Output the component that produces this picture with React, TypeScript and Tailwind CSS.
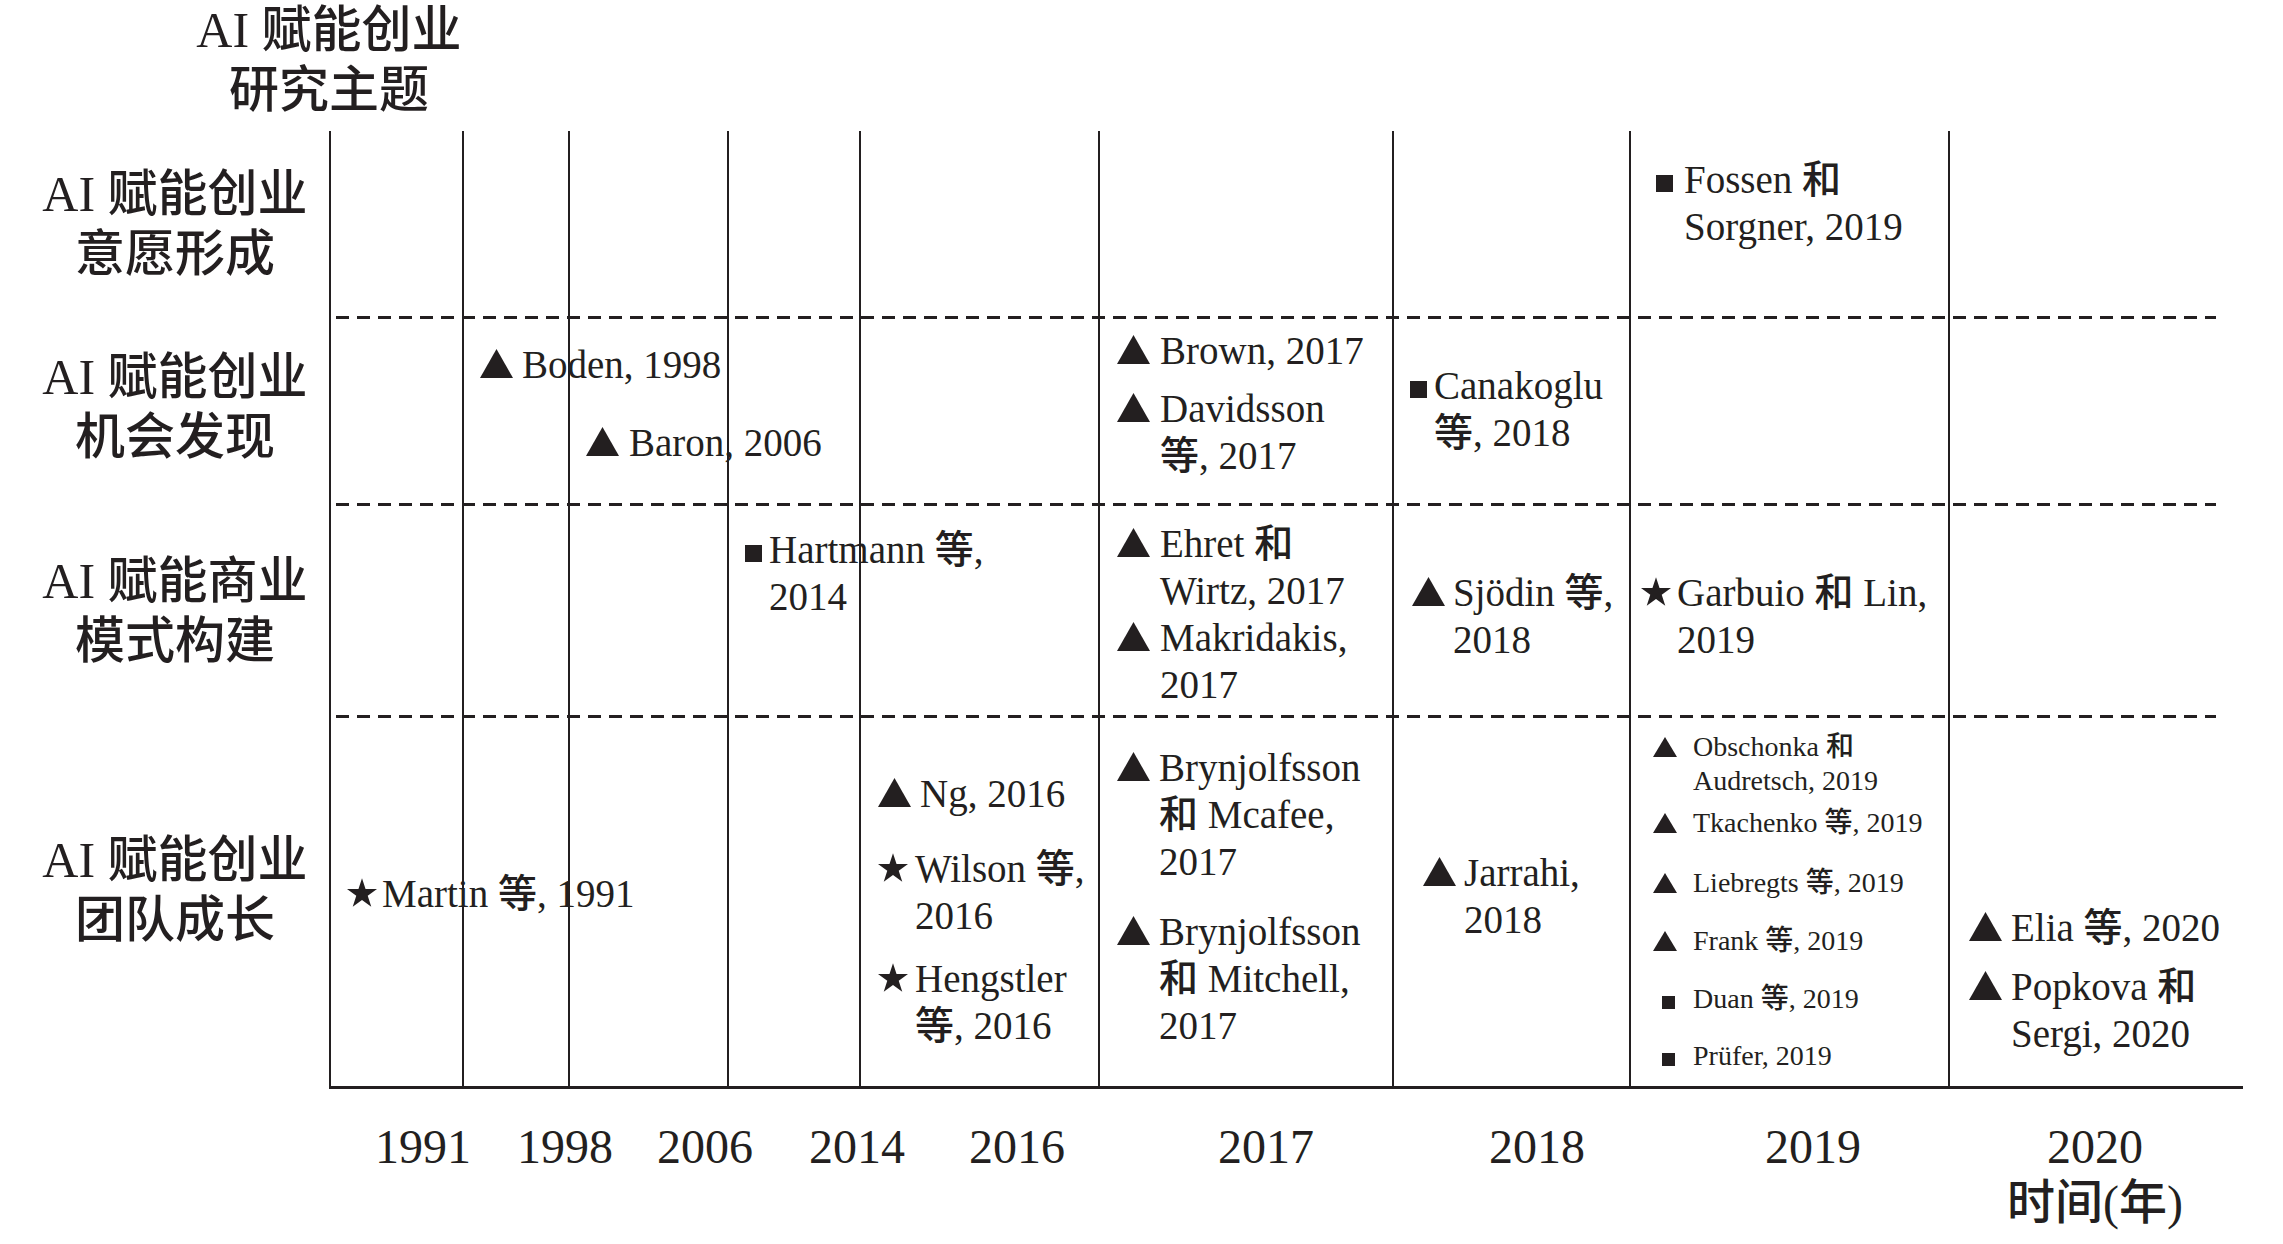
import type { ReactNode } from 'react';

type Mark = 'tri' | 'sq' | 'star' | 'stri' | 'ssq';

const INK = '#231f20';

// column widths of the timeline, left to right (1991 … 2020)
const COLS = [
  'w-[133px]',
  'w-[106px]',
  'w-[159px]',
  'w-[132px]',
  'w-[239px]',
  'w-[294px]',
  'w-[237px]',
  'w-[319px]',
  'w-[295px]',
];

function Marker({ mark }: { mark: Mark }) {
  if (mark === 'tri') {
    return (
      <svg width="33" height="29" viewBox="0 0 33 29" className="mt-[8px]">
        <path d="M16.5 0 L33 29 L0 29 Z" fill={INK} />
      </svg>
    );
  }
  if (mark === 'sq') {
    return (
      <svg width="17" height="17" viewBox="0 0 17 17" className="mt-[19px]">
        <rect width="17" height="17" fill={INK} />
      </svg>
    );
  }
  if (mark === 'star') {
    return (
      <svg width="30" height="29" viewBox="0 0 30 28.6" className="mt-[8px]">
        <polygon
          points="15,0 18.54,10.9 30,10.9 20.73,17.63 24.27,28.53 15,21.79 5.73,28.53 9.27,17.63 0,10.9 11.46,10.9"
          fill={INK}
        />
      </svg>
    );
  }
  if (mark === 'stri') {
    return (
      <svg width="24" height="20" viewBox="0 0 24 20" className="mt-[7px]">
        <path d="M12 0 L24 20 L0 20 Z" fill={INK} />
      </svg>
    );
  }
  return (
    <svg width="13" height="13" viewBox="0 0 13 13" className="mt-[14px] ml-[9px]">
      <rect width="13" height="13" fill={INK} />
    </svg>
  );
}

function Entry({
  mark,
  lines,
  slot,
  className = '',
}: {
  mark: Mark;
  lines: string[];
  slot: string;
  className?: string;
}) {
  const small = mark === 'stri' || mark === 'ssq';
  return (
    <div className={`flex ${className}`}>
      <div className={`shrink-0 ${slot}`}>
        <Marker mark={mark} />
      </div>
      <div className={small ? 'text-[28px] leading-[34px]' : 'text-[39px] leading-[47px]'}>
        {lines.map((l) => (
          <div key={l}>{l}</div>
        ))}
      </div>
    </div>
  );
}

function Row({
  label,
  height,
  labelPad = '',
  cells,
  last = false,
}: {
  label: string[];
  height: string;
  labelPad?: string;
  cells: (ReactNode | null)[];
  last?: boolean;
}) {
  return (
    <div className={`flex ${height}`}>
      <div
        className={`w-[329px] shrink-0 flex flex-col items-center justify-center pl-[21px] text-[50px] leading-[60px] ${labelPad}`}
      >
        {label.map((l) => (
          <div key={l}>{l}</div>
        ))}
      </div>
      {COLS.map((w, i) => (
        <div
          key={i}
          className={`${w} shrink-0 border-l-2 border-[#231f20] ${last ? 'border-b-[3px]' : ''}`}
        >
          {cells[i] ?? null}
        </div>
      ))}
    </div>
  );
}

function Dashes() {
  return (
    <div className="flex h-[3px]">
      <div className="w-[329px] shrink-0" />
      <div className="flex bg-[image:repeating-linear-gradient(90deg,#231f20_0px,#231f20_13px,transparent_13px,transparent_21px)] bg-no-repeat bg-[length:1880px_3px] bg-[position:7px_0px]">
        {COLS.map((w, i) => (
          <div key={i} className={`${w} shrink-0 border-l-2 border-[#231f20]`} />
        ))}
      </div>
    </div>
  );
}

export default function App() {
  return (
    <div
      className="w-[2283px] h-[1244px] overflow-hidden bg-white text-[#231f20] font-medium whitespace-nowrap"
      style={{ fontFamily: '"Liberation Serif", "Noto Sans CJK SC", serif' }}
    >
      {/* axis title */}
      <div className="h-[131px] w-[658px] text-center text-[50px] leading-[60px]">
        <div>AI 赋能创业</div>
        <div>研究主题</div>
      </div>

      <Row
        label={['AI 赋能创业', '意愿形成']}
        height="h-[185px]"
        cells={[
          null,
          null,
          null,
          null,
          null,
          null,
          null,
          <div className="pl-[25px] pt-[25px]">
            <Entry mark="sq" slot="w-[28px]" lines={['Fossen 和', 'Sorgner, 2019']} />
          </div>,
          null,
        ]}
      />
      <Dashes />
      <Row
        label={['AI 赋能创业', '机会发现']}
        height="h-[184px]"
        labelPad="pb-[8px]"
        cells={[
          null,
          <div className="pl-[16px] pt-[22px]">
            <Entry mark="tri" slot="w-[42px]" lines={['Boden, 1998']} />
          </div>,
          <div className="pl-[16px] pt-[100px]">
            <Entry mark="tri" slot="w-[43px]" lines={['Baron, 2006']} />
          </div>,
          null,
          null,
          <div className="pl-[17px] pt-[8px]">
            <Entry mark="tri" slot="w-[43px]" lines={['Brown, 2017']} />
            <Entry mark="tri" slot="w-[43px]" className="mt-[11px]" lines={['Davidsson', '等, 2017']} />
          </div>,
          <div className="pl-[16px] pt-[43px]">
            <Entry mark="sq" slot="w-[24px]" lines={['Canakoglu', '等, 2018']} />
          </div>,
          null,
          null,
        ]}
      />
      <Dashes />
      <Row
        label={['AI 赋能商业', '模式构建']}
        height="h-[209px]"
        cells={[
          null,
          null,
          null,
          <div className="pl-[16px] pt-[20px]">
            <Entry mark="sq" slot="w-[24px]" lines={['Hartmann 等,', '2014']} />
          </div>,
          null,
          <div className="pl-[17px] pt-[14px]">
            <Entry mark="tri" slot="w-[43px]" lines={['Ehret 和', 'Wirtz, 2017']} />
            <Entry mark="tri" slot="w-[43px]" lines={['Makridakis,', '2017']} />
          </div>,
          <div className="pl-[18px] pt-[63px]">
            <Entry mark="tri" slot="w-[41px]" lines={['Sjödin 等,', '2018']} />
          </div>,
          <div className="pl-[10px] pt-[63px]">
            <Entry mark="star" slot="w-[36px]" lines={['Garbuio 和 Lin,', '2019']} />
          </div>,
          null,
        ]}
      />
      <Dashes />
      <Row
        label={['AI 赋能创业', '团队成长']}
        height="h-[371px]"
        labelPad="pb-[28px]"
        last
        cells={[
          <div className="pl-[16px] pt-[152px]">
            <Entry mark="star" slot="w-[35px]" lines={['Martin 等, 1991']} />
          </div>,
          null,
          null,
          null,
          <div className="pl-[17px] pt-[52px]">
            <Entry mark="tri" slot="w-[42px]" lines={['Ng, 2016']} />
            <Entry mark="star" slot="w-[37px]" className="mt-[28px]" lines={['Wilson 等,', '2016']} />
            <Entry mark="star" slot="w-[37px]" className="mt-[16px]" lines={['Hengstler', '等, 2016']} />
          </div>,
          <div className="pl-[17px] pt-[26px]">
            <Entry mark="tri" slot="w-[42px]" lines={['Brynjolfsson', '和 Mcafee,', '2017']} />
            <Entry
              mark="tri"
              slot="w-[42px]"
              className="mt-[23px]"
              lines={['Brynjolfsson', '和 Mitchell,', '2017']}
            />
          </div>,
          <div className="pl-[29px] pt-[131px]">
            <Entry mark="tri" slot="w-[41px]" lines={['Jarrahi,', '2018']} />
          </div>,
          <div className="pl-[22px] pt-[12px]">
            <Entry mark="stri" slot="w-[40px]" lines={['Obschonka 和', 'Audretsch, 2019']} />
            <Entry mark="stri" slot="w-[40px]" className="mt-[8px]" lines={['Tkachenko 等, 2019']} />
            <Entry mark="stri" slot="w-[40px]" className="mt-[26px]" lines={['Liebregts 等, 2019']} />
            <Entry mark="stri" slot="w-[40px]" className="mt-[24px]" lines={['Frank 等, 2019']} />
            <Entry mark="ssq" slot="w-[40px]" className="mt-[24px]" lines={['Duan 等, 2019']} />
            <Entry mark="ssq" slot="w-[40px]" className="mt-[23px]" lines={['Prüfer, 2019']} />
          </div>,
          <div className="pl-[19px] pt-[186px]">
            <Entry mark="tri" slot="w-[42px]" lines={['Elia 等, 2020']} />
            <Entry mark="tri" slot="w-[42px]" className="mt-[12px]" lines={['Popkova 和', 'Sergi, 2020']} />
          </div>,
        ]}
      />

      {/* year labels */}
      <div className="flex pt-[30px] text-[48px] leading-[56px]">
        <div className="ml-[363px] w-[120px] text-center">1991</div>
        <div className="ml-[22px] w-[120px] text-center">1998</div>
        <div className="ml-[20px] w-[120px] text-center">2006</div>
        <div className="ml-[32px] w-[120px] text-center">2014</div>
        <div className="ml-[40px] w-[120px] text-center">2016</div>
        <div className="ml-[129px] w-[120px] text-center">2017</div>
        <div className="ml-[151px] w-[120px] text-center">2018</div>
        <div className="ml-[156px] w-[120px] text-center">2019</div>
        <div className="ml-[122px] w-[200px] text-center">
          <div>2020</div>
          <div>时间(年)</div>
        </div>
      </div>
    </div>
  );
}
